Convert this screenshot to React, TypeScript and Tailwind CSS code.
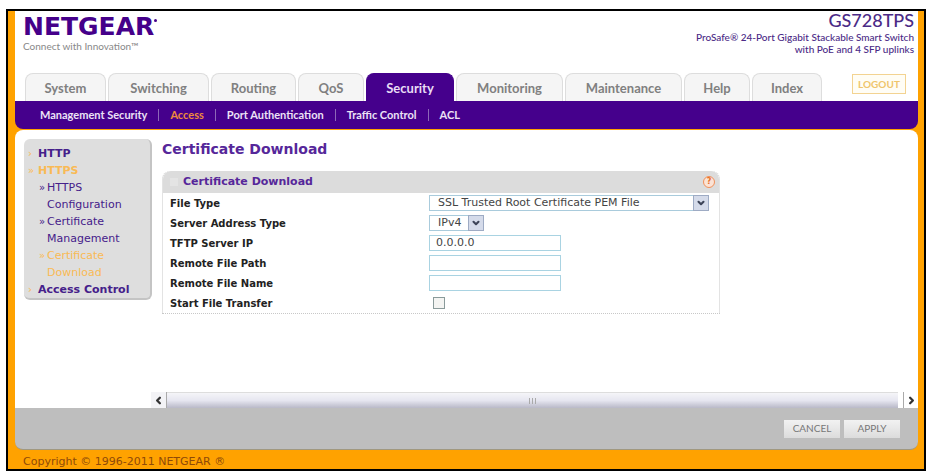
import { ChevronDown, ChevronLeft, ChevronRight } from 'lucide-react';
import clsx from 'clsx';

const TABS = [
  { label: 'System', width: 'w-[81px]' },
  { label: 'Switching', width: 'w-[101px]' },
  { label: 'Routing', width: 'w-[85px]' },
  { label: 'QoS', width: 'w-[66px]' },
  { label: 'Security', width: 'w-[88px]', active: true },
  { label: 'Monitoring', width: 'w-[107px]' },
  { label: 'Maintenance', width: 'w-[117px]' },
  { label: 'Help', width: 'w-[66px]' },
  { label: 'Index', width: 'w-[70px]' },
];

const SUB_TABS = ['Management Security', 'Access', 'Port Authentication', 'Traffic Control', 'ACL'];

function Header() {
  return (
    <header className="bg-white font-['Lato','Liberation_Sans',sans-serif]">
      <div className="flex h-[62px] justify-between pl-2 pr-1">
        <div>
          <div className="flex pt-1 font-['DejaVu_Sans',sans-serif] text-[25px] leading-6 font-bold text-[#45008a]">
            NETGEAR
            <span className="mt-1 h-[3px] w-[3px] rounded-full bg-[#45008a]" />
          </div>
          <p className="pt-px text-[10px] leading-3 text-[#888]">Connect with Innovation™</p>
        </div>
        <div className="text-right text-[#4b2a86]">
          <p className="text-[18px] leading-[18px] font-medium">GS728TPS</p>
          <p className="pt-[2px] text-[10px] leading-3 font-medium">
            ProSafe® 24-Port Gigabit Stackable Smart Switch
            <br />
            with PoE and 4 SFP uplinks
          </p>
        </div>
      </div>
      <div className="flex items-start justify-between pl-[10px] pr-3">
        <nav className="flex gap-[2px]">
          {TABS.map((tab) => (
            <a
              key={tab.label}
              href="#"
              className={clsx(
                'flex h-7 items-center justify-center rounded-t-lg border border-b-0 pt-[2px] text-[13px] font-bold',
                tab.width,
                tab.active
                  ? 'border-[#45008c] bg-[#45008c] text-[#e8dcf5]'
                  : 'border-[#ddd] bg-[#f5f5f5] text-[#808080]',
              )}
            >
              {tab.label}
            </a>
          ))}
        </nav>
        <button className="mt-px h-5 w-[54px] border border-[#f3d391] bg-[#fffdf5] text-[10px] leading-3 font-bold text-[#efc56c]">
          LOGOUT
        </button>
      </div>
    </header>
  );
}

function SubNav() {
  return (
    <nav className="flex h-7 items-center rounded-b-lg bg-[#45008c] pl-[25px] font-['Lato','Liberation_Sans',sans-serif] text-[11px] font-bold text-[#ece2f6]">
      {SUB_TABS.map((label, i) => (
        <div key={label} className="flex items-center">
          {i > 0 && <span className="mx-[11px] h-3 w-px bg-[#8d68b8]" />}
          <a href="#" className={label === 'Access' ? 'text-[#ef8b3c]' : ''}>
            {label}
          </a>
        </div>
      ))}
    </nav>
  );
}

function Sidebar() {
  return (
    <aside className="w-32 shrink-0 self-start rounded-md border-r-2 border-b-2 border-[#c4c4c4] bg-[#dedede] pt-[6px] pl-1 text-[11px] leading-[17px] text-[#45208a]">
      <SideLink label="HTTP" mark="›" bold />
      <SideLink label="HTTPS" mark="»" bold active />
      <div className="pl-[11px]">
        <SideLink label="HTTPS Configuration" mark="»" />
        <SideLink label="Certificate Management" mark="»" />
        <SideLink label="Certificate Download" mark="»" active />
      </div>
      <SideLink label="Access Control" mark="›" bold />
    </aside>
  );
}

function SideLink({ label, mark, bold, active }: { label: string; mark: string; bold?: boolean; active?: boolean }) {
  return (
    <a href="#" className={clsx('flex', active && 'text-[#f9ba55]', bold && 'font-bold')}>
      <span className={clsx('shrink-0 text-[10px] font-normal', bold ? 'w-[10px] text-[#f9ba55]' : 'w-2')}>{mark}</span>
      <span>{label}</span>
    </a>
  );
}

function SelectBox({ id, option, width }: { id: string; option: string; width: string }) {
  return (
    <div className={clsx('relative', width)}>
      <select
        id={id}
        className="block h-4 w-full appearance-none border border-[#a9cbdc] bg-white pl-2 text-[11px] leading-3 text-[#444]"
      >
        <option>{option}</option>
      </select>
      <span className="pointer-events-none absolute top-0 right-0 flex h-4 w-4 items-center justify-center border border-[#9eabc4] bg-[#d5dbea]">
        <ChevronDown size={10} strokeWidth={5} className="text-[#3d4458]" />
      </span>
    </div>
  );
}

function Row({ id, label, children }: { id: string; label: string; children: React.ReactNode }) {
  return (
    <div className="grid h-5 grid-cols-[259px_1fr] items-center">
      <label htmlFor={id} className="text-[10px] font-bold text-[#222]">
        {label}
      </label>
      {children}
    </div>
  );
}

const INPUT = 'h-4 w-[132px] border border-[#a9d3e2] bg-white pl-[6px] text-[11px] text-[#444]';

function CertificatePanel() {
  return (
    <section className="mt-3 max-w-[558px] rounded-t-lg border border-t-0 border-dotted border-[#c8c8c8]">
      <div className="flex h-[22px] items-center justify-between rounded-t-lg bg-[#dcdcdc] pr-1 pl-[7px]">
        <div className="flex items-center gap-[5px]">
          <span className="h-2 w-2 bg-[#e4e4e4]" />
          <h2 className="text-[11px] font-bold text-[#56279a]">Certificate Download</h2>
        </div>
        <button
          aria-label="Help"
          className="flex h-3 w-3 items-center justify-center rounded-full border border-[#f0905a] bg-[#fbe3d6] text-[8px] leading-2 font-bold text-[#e8702a]"
        >
          ?
        </button>
      </div>
      <form className="pl-[7px]">
        <Row id="file-type" label="File Type">
          <SelectBox id="file-type" option="SSL Trusted Root Certificate PEM File" width="w-[280px]" />
        </Row>
        <Row id="address-type" label="Server Address Type">
          <SelectBox id="address-type" option="IPv4" width="w-[55px]" />
        </Row>
        <Row id="server-ip" label="TFTP Server IP">
          <input id="server-ip" className={INPUT} defaultValue="0.0.0.0" />
        </Row>
        <Row id="file-path" label="Remote File Path">
          <input id="file-path" className={INPUT} />
        </Row>
        <Row id="file-name" label="Remote File Name">
          <input id="file-name" className={INPUT} />
        </Row>
        <Row id="start-transfer" label="Start File Transfer">
          <input
            id="start-transfer"
            type="checkbox"
            className="ml-1 h-3 w-3 appearance-none border border-[#8a9a9a] bg-[#f4f4f2]"
          />
        </Row>
      </form>
    </section>
  );
}

function ScrollBar() {
  return (
    <div className="ml-[136px] flex h-4 items-stretch bg-[#f3f3f6]">
      <button aria-label="Scroll left" className="flex w-4 items-center justify-center border-r border-[#aaa]">
        <ChevronLeft size={11} strokeWidth={5} className="text-[#333]" />
      </button>
      <div className="flex flex-1 items-center justify-center gap-[2px] border-t border-[#ddd] bg-linear-to-b from-[#f5f5f8] via-[#e6e6f0] to-[#b9b9c8]">
        <span className="h-[6px] w-px bg-[#aaa]" />
        <span className="h-[6px] w-px bg-[#aaa]" />
        <span className="h-[6px] w-px bg-[#aaa]" />
      </div>
      <span className="w-[6px] border-r border-[#aaa] bg-white" />
      <button aria-label="Scroll right" className="flex w-[14px] items-center justify-center bg-white">
        <ChevronRight size={11} strokeWidth={5} className="text-[#333]" />
      </button>
    </div>
  );
}

function ActionBar() {
  const button = 'h-[18px] w-14 bg-linear-to-b from-[#f2f2f2] to-[#dcdcdc] text-[10px] text-[#777]';
  return (
    <div className="flex h-[42px] items-center justify-end gap-1 rounded-b-lg border-b border-[#a09880] bg-[#bebebe] pr-[18px] font-['Lato','Liberation_Sans',sans-serif]">
      <button className={button}>CANCEL</button>
      <button className={button}>APPLY</button>
    </div>
  );
}

export default function App() {
  return (
    <div className="flex min-h-screen flex-col bg-white pt-[9px] pr-[3px] pb-[2px] pl-[6px] font-['DejaVu_Sans',Verdana,sans-serif]">
      <div className="flex flex-1 flex-col border-2 border-black bg-[#ffa200]">
        <div className="flex flex-1 flex-col pr-[6px] pl-[7px]">
          <Header />
          <SubNav />
          <main className="mt-px flex flex-1 flex-col rounded-t-lg bg-white">
            <div className="flex flex-1 pt-[9px] pl-[9px]">
              <Sidebar />
              <div className="min-w-0 flex-1 pl-[10px]">
                <h1 className="text-[14px] leading-5 font-bold text-[#56279a]">Certificate Download</h1>
                <CertificatePanel />
              </div>
            </div>
            <ScrollBar />
          </main>
          <ActionBar />
        </div>
        <footer className="pt-1 pl-[15px] text-[11px] leading-[15px] text-[#8f4a08]">Copyright © 1996-2011 NETGEAR ®</footer>
      </div>
    </div>
  );
}
